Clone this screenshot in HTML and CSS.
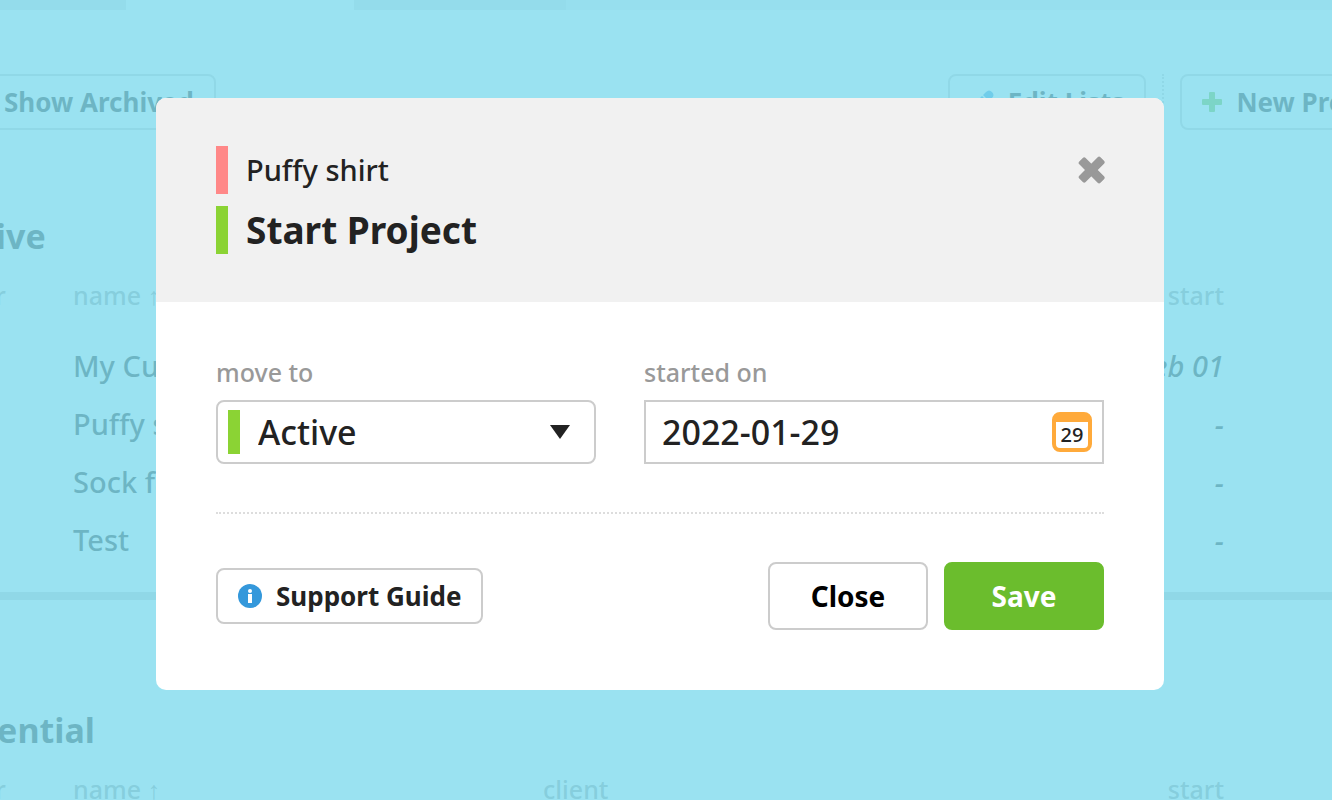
FILE: index.html
```
<!DOCTYPE html>
<html lang="en">
<head>
    <meta charset="UTF-8">
    <meta name="viewport" content="width=device-width, initial-scale=1.0">
    <title>Start Project</title>
    <link rel="stylesheet" href="styles.css">
</head>
<body>
    <div class="page">
        <nav class="tabs">
            <span class="tab tab-first"></span>
            <span class="tab tab-current"></span>
            <span class="tab tab-other"></span>
        </nav>

        <main class="board">
            <div class="toolbar">
                <button class="button" type="button">
                    <svg width="28" height="24" viewBox="0 0 28 24" fill="#999"><path d="M2 2h24v6H2zM4 10h20v12H4z"/></svg>
                    Show Archived
                </button>
                <div class="toolbar-right">
                    <button class="button" type="button">
                        <svg width="24" height="24" viewBox="0 0 24 24" fill="#3498db"><path d="M1 23l1-7L12 6l6 6L8 22zM13 5l3-3q3-3 6 0t0 6l-3 3z"/></svg>
                        Edit Lists
                    </button>
                    <span class="separator"></span>
                    <button class="button" type="button">
                        <svg width="20" height="20" viewBox="0 0 20 20" fill="#6bbd2d"><path d="M8 0h4q1 0 1 1v6h6q1 0 1 1v4q0 1-1 1h-6v6q0 1-1 1H8q-1 0-1-1v-6H1q-1 0-1-1V8q0-1 1-1h6V1q0-1 1-1z"/></svg>
                        New Project
                    </button>
                </div>
            </div>

            <section class="list">
                <h2>Active</h2>
                <table>
                    <thead>
                        <tr><th class="col-order">order</th><th class="col-name">name ↑</th><th>client</th><th class="col-date">start</th><th class="col-due">due</th></tr>
                    </thead>
                    <tbody>
                        <tr><td></td><td>My Custom Project</td><td></td><td class="date">Feb 01</td><td></td></tr>
                        <tr><td></td><td>Puffy shirt</td><td></td><td class="date">-</td><td></td></tr>
                        <tr><td></td><td>Sock factory</td><td></td><td class="date">-</td><td></td></tr>
                        <tr><td></td><td>Test</td><td></td><td class="date">-</td><td></td></tr>
                    </tbody>
                </table>
            </section>

            <section class="list">
                <h2>Potential</h2>
                <table>
                    <thead>
                        <tr><th class="col-order">order</th><th class="col-name">name ↑</th><th>client</th><th class="col-date">start</th><th class="col-due">due</th></tr>
                    </thead>
                </table>
            </section>
        </main>
    </div>

    <div class="overlay">
        <form class="modal" role="dialog" aria-labelledby="modal-title">
            <header class="modal-header">
                <div class="titles">
                    <p class="project-name">Puffy shirt</p>
                    <h1 id="modal-title">Start Project</h1>
                </div>
                <button class="dismiss" type="button" aria-label="Close window">
                    <svg width="28" height="28" viewBox="0 0 28 28" fill="#999">
                        <rect x="-1" y="10" width="30" height="9" rx="2" transform="rotate(45 14 14)"/>
                        <rect x="-1" y="9" width="30" height="9" rx="2" transform="rotate(-45 14 14)"/>
                    </svg>
                </button>
            </header>

            <div class="modal-body">
                <div class="fields">
                    <div class="field">
                        <label for="move-to">move to</label>
                        <div class="select-box">
                            <span class="swatch"></span>
                            <select id="move-to">
                                <option>Active</option>
                                <option>Potential</option>
                            </select>
                            <svg class="arrow" width="20" height="14" viewBox="0 0 20 14"><path d="M0 0h20L10 14z" fill="#222"/></svg>
                        </div>
                    </div>
                    <div class="field">
                        <label for="started-on">started on</label>
                        <div class="date-box">
                            <input id="started-on" type="text" value="2022-01-29">
                            <button class="calendar" type="button" aria-label="Pick a date">29</button>
                        </div>
                    </div>
                </div>

                <footer class="modal-footer">
                    <button class="button" type="button">
                        <svg width="24" height="24" viewBox="0 0 24 24"><circle cx="12" cy="12" r="12" fill="#3498db"/><circle cx="12" cy="7" r="2" fill="#fff"/><path d="M10 10h4v9h-4z" fill="#fff"/></svg>
                        Support Guide
                    </button>
                    <div class="actions">
                        <button class="action" type="button">Close</button>
                        <button class="action save" type="submit">Save</button>
                    </div>
                </footer>
            </div>
        </form>
    </div>
</body>
</html>
```
FILE: styles.css
```
* {
    box-sizing: border-box;
}

body, html {
    margin: 0;
    height: 100%;
    overflow: hidden;
    background: #fff;
    color: #222;
    font-family: "Noto Sans", sans-serif;
    font-size: 29px;
    font-weight: 500;
}

h1, h2, p {
    margin: 0;
}

button, input, select {
    font-family: inherit;
    font-weight: inherit;
    color: inherit;
}

button {
    cursor: pointer;
}

svg {
    flex: none;
}

.page {
    height: 100%;
    overflow: hidden;
}

/* Tabs along the top edge */
.tabs {
    display: flex;
    height: 10px;
    background: #f1f1f1;
}

.tab {
    background: #e1e1e1;
}

.tab-first {
    width: 126px;
}

.tab-current {
    width: 228px;
    background: #fff;
}

.tab-other {
    width: 212px;
}

/* The board is wider than the window on both sides */
.board {
    margin: 64px -83px 0 -60px;
}

.toolbar, .toolbar-right {
    display: flex;
    justify-content: space-between;
}

.toolbar {
    margin-bottom: 82px;
}

.toolbar-right {
    gap: 16px;
}

.separator {
    border-left: 2px dotted #ccc;
}

.button {
    display: flex;
    align-items: center;
    gap: 14px;
    height: 56px;
    padding: 0 20px;
    border: 2px solid #ccc;
    border-radius: 8px;
    background: #fff;
    font-size: 26px;
    font-weight: bold;
    white-space: nowrap;
}

.list h2 {
    font-size: 34px;
    line-height: 48px;
}

.list + .list {
    margin-top: 23px;
    padding-top: 106px;
    border-top: 8px solid #ccc;
}

table {
    width: 100%;
    table-layout: fixed;
    border-collapse: collapse;
}

th, td {
    padding: 0;
    text-align: left;
    white-space: nowrap;
}

th {
    padding: 15px 0 22px;
    color: #999;
    font-size: 25px;
    font-weight: 500;
    line-height: 40px;
}

td {
    height: 58px;
    line-height: 56px;
}

.col-order {
    width: 133px;
}

.col-name {
    width: 470px;
}

.col-date, .col-due {
    width: 191px;
    text-align: right;
}

.date {
    font-style: italic;
    text-align: right;
}

/* Modal */
.overlay {
    position: fixed;
    inset: 0;
    padding: 98px 168px 0 156px;
    background: rgba(129, 219, 238, 0.8);
}

.modal {
    border-radius: 10px;
    background: #fff;
    overflow: hidden;
}

.modal-header {
    display: flex;
    justify-content: space-between;
    align-items: flex-start;
    padding: 48px 58px 48px 60px;
    background: #f1f1f1;
}

.titles {
    display: flex;
    flex-direction: column;
    gap: 12px;
}

.project-name, .titles h1 {
    padding-left: 18px;
    border-left: 12px solid #8bd334;
    line-height: 48px;
}

.project-name {
    border-color: #ff8888;
}

.titles h1 {
    font-size: 37px;
}

.dismiss {
    display: flex;
    align-items: center;
    height: 48px;
    padding: 0;
    border: none;
    background: none;
}

.modal-body {
    padding: 54px 60px 60px;
}

.fields {
    display: grid;
    grid-template-columns: minmax(0, 380fr) minmax(0, 460fr);
    gap: 48px;
    padding-bottom: 48px;
    border-bottom: 2px dotted #ddd;
}

.field label {
    display: block;
    margin-bottom: 12px;
    color: #999;
    font-size: 25px;
    line-height: 32px;
}

.select-box, .date-box {
    display: flex;
    align-items: center;
    height: 64px;
    border: 2px solid #ccc;
}

.select-box {
    position: relative;
    padding-left: 10px;
    border-radius: 8px;
}

.swatch {
    width: 12px;
    height: 44px;
    background: #8bd334;
}

.select-box select, .date-box input {
    flex: 1;
    min-width: 0;
    height: 100%;
    border: none;
    outline: none;
    background: none;
    font-size: 34px;
}

.select-box select {
    appearance: none;
    padding: 0 60px 0 18px;
}

.arrow {
    position: absolute;
    right: 24px;
    pointer-events: none;
}

.date-box input {
    padding: 0 16px;
}

.calendar {
    width: 40px;
    height: 40px;
    margin-right: 10px;
    padding: 0;
    border: 4px solid #ffaa3b;
    border-top-width: 10px;
    border-radius: 8px;
    background: #fff;
    font-size: 20px;
    line-height: 26px;
}

.modal-footer {
    display: flex;
    justify-content: space-between;
    align-items: center;
    padding-top: 48px;
}

.actions {
    display: flex;
    gap: 16px;
}

.action {
    width: 160px;
    height: 68px;
    border: 2px solid #ccc;
    border-radius: 8px;
    background: #fff;
    color: #000;
    font-size: 28px;
    font-weight: bold;
}

.save {
    border-color: #6bbd2d;
    background: #6bbd2d;
    color: #fff;
}
```
